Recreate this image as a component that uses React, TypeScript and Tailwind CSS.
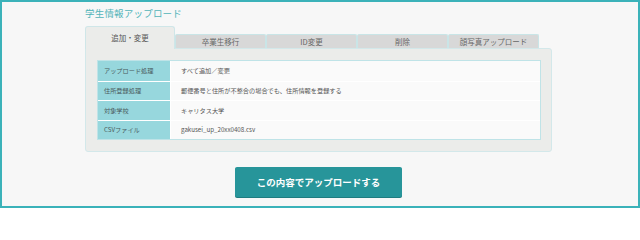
const tabs = ["卒業生移行", "ID変更", "削除", "顔写真アップロード"];

const rows = [
  { label: "アップロード処理", value: "すべて追加／変更" },
  { label: "住所登録処理", value: "郵便番号と住所が不整合の場合でも、住所情報を登録する" },
  { label: "対象学校", value: "キャリタス大学" },
  { label: "CSVファイル", value: "gakusei_up_20xx0408.csv" },
];

const App = () => {
  return (
    <div
      className="w-[640px] h-[208px] box-border border-2 border-[#3bb2b9] bg-[#f7f7f7] overflow-hidden"
      style={{ fontFamily: '"Noto Sans CJK JP", "Noto Sans", sans-serif' }}
    >
      <div className="ml-[83px] w-[467px]">
        <h1 className="pt-[4px] h-[23px] text-[9.5px] leading-[14px] text-[#53b4b9] tracking-[0.2px]">
          学生情報アップロード
        </h1>

        <div className="flex items-end h-[23px]">
          <div className="w-[90px] h-[23px] box-border border border-b-0 border-[#cfe6e8] rounded-t-[3px] bg-[#ebecea] flex items-center justify-center text-[7.5px] text-[#555] relative z-10 -mb-px pb-px">
            追加・変更
          </div>
          {tabs.map((t) => (
            <div
              key={t}
              className="w-[91px] h-[14px] box-border border border-b-0 border-[#c9e5e7] rounded-t-[2px] bg-[#d8d8d8] flex items-center justify-center text-[7.5px] text-[#666]"
            >
              {t}
            </div>
          ))}
        </div>

        <div className="h-[104px] box-border border border-[#d3e8ea] rounded-b-[3px] rounded-tr-[3px] bg-[#ebecea] px-[11px] pt-[11px]">
          <div className="w-[444px] box-border border border-[#bfe3e7] bg-[#fafafa]">
            {rows.map((r, i) => (
              <div
                key={r.label}
                className={`flex h-[19.5px] ${i > 0 ? "border-t border-white" : ""}`}
              >
                <div className="w-[72px] bg-[#97d7dd] pl-[6px] flex items-center text-[6.2px] text-[#4a5a5c]">
                  {r.label}
                </div>
                <div className="flex-1 pl-[10px] flex items-center text-[6.2px] text-[#555] border-l border-white">
                  {r.value}
                </div>
              </div>
            ))}
          </div>
        </div>

        <div className="mt-[15px] flex justify-center">
          <button className="w-[167px] h-[30px] rounded-[2px] bg-[#27959a] text-white text-[9.5px] font-bold shadow-[0_1px_0_#1f7c80]">
            この内容でアップロードする
          </button>
        </div>
      </div>
    </div>
  );
};

export default App;
